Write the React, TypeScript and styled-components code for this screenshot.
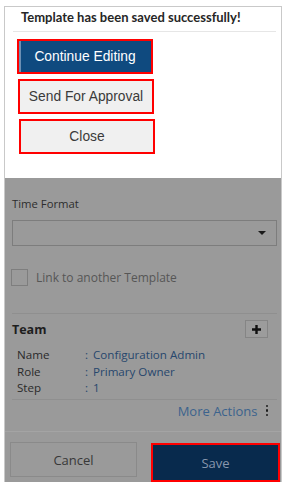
import React from "react";
import styled, { createGlobalStyle } from "styled-components";

const Global = createGlobalStyle`
  html, body { margin: 0; padding: 0; background: #ffffff; }
  body { font-family: "Open Sans", "Noto Sans", sans-serif; }
  * { box-sizing: border-box; }
`;

const Frame = styled.div`
  margin: 6px 0 0 4px;
  width: 278px;
  height: 476px;
  border: 1px solid #c9c9c9;
  border-bottom: none;
  display: flex;
  flex-direction: column;
  overflow: visible;
`;

const Dialog = styled.div`
  background: #ffffff;
  height: 171px;
  display: flex;
  flex-direction: column;
`;

const DialogTitle = styled.div`
  font-family: "Lato", "Open Sans", sans-serif;
  font-weight: 700;
  font-size: 13px;
  color: #262626;
  height: 25px;
  line-height: 21px;
  border-bottom: 1px solid #e6e6e6;
  margin: 0 5px 0 8px;
  padding-left: 8px;
`;

const ButtonStack = styled.div`
  display: flex;
  flex-direction: column;
  gap: 5px;
  padding-top: 7px;
  padding-left: 12px;
`;

const DialogButton = styled.button<{ $primary?: boolean; $shift?: number }>`
  width: 136px;
  height: 35px;
  margin-left: ${(p) => p.$shift ?? 0}px;
  border: 2px solid #ff0000;
  background: ${(p) => (p.$primary ? "#0f4a7f" : "#f0f0f0")};
  box-shadow: ${(p) => (p.$primary ? "inset 2px 0 0 #6d8fb3" : "none")};
  color: ${(p) => (p.$primary ? "#ffffff" : "#3a3a3a")};
  font-family: "Liberation Sans", Arial, sans-serif;
  font-size: 13.8px;
  padding: 0;
  cursor: pointer;
`;

const Dimmed = styled.div`
  flex: 1;
  background: #9a9a9a;
  display: flex;
  flex-direction: column;
`;

const Form = styled.div`
  padding: 18px 4px 0 7px;
  display: flex;
  flex-direction: column;
`;

const FieldLabel = styled.div`
  font-size: 11.3px;
  line-height: 15px;
  color: #2d2d2d;
  margin-bottom: 9px;
`;

const Select = styled.div`
  height: 26px;
  border: 1px solid #7d7d7d;
  display: flex;
  align-items: center;
  justify-content: flex-end;
  padding-right: 10px;
`;

const Caret = styled.div`
  width: 0;
  height: 0;
  border-left: 4px solid transparent;
  border-right: 4px solid transparent;
  border-top: 4px solid #1a1a1a;
`;

const CheckRow = styled.label`
  display: flex;
  align-items: center;
  gap: 8px;
  margin: 23px 0 0 -1px;
  font-size: 12px;
  color: #565656;
`;

const Box = styled.span`
  width: 17px;
  height: 17px;
  border: 1px solid #7e7e7e;
  display: inline-block;
`;

const Divider = styled.div<{ $top: number }>`
  height: 1px;
  background: #8f8f8f;
  margin-top: ${(p) => p.$top}px;
`;

const SectionHead = styled.div`
  display: flex;
  align-items: center;
  justify-content: space-between;
  margin-top: 6px;
  padding-right: 9px;
`;

const SectionTitle = styled.div`
  font-weight: 700;
  font-size: 12.5px;
  color: #1e1e1e;
`;

const AddButton = styled.button`
  width: 23px;
  height: 18px;
  border: 1px solid #858585;
  background: #9c9c9c;
  padding: 0;
  display: flex;
  align-items: center;
  justify-content: center;
`;

const Details = styled.div`
  display: grid;
  grid-template-columns: 68px 8px 1fr;
  padding-left: 5px;
  margin-top: 9px;
  font-size: 11.6px;
  line-height: 16.5px;
  color: #2a2a2a;
`;

const Value = styled.span`
  color: #27476d;
`;

const Colon = styled.span`
  color: #27476d;
`;

const MoreRow = styled.div`
  display: flex;
  justify-content: flex-end;
  align-items: center;
  gap: 8px;
  padding-right: 9px;
  margin-top: 1px;
  font-size: 13px;
  color: #3c638d;
  height: 20px;
`;

const Kebab = styled.span`
  display: flex;
  flex-direction: column;
  gap: 2px;
  span {
    width: 2.5px;
    height: 2.5px;
    background: #1c1c1c;
    border-radius: 50%;
  }
`;

const Footer = styled.div`
  margin-top: auto;
  border-top: 1px solid #a4a4a4;
  display: grid;
  grid-template-columns: 127px 129px;
  column-gap: 14px;
  padding: 10px 0 0 5px;
  height: 51px;
  align-items: start;
`;

const FooterButton = styled.button<{ $save?: boolean }>`
  height: ${(p) => (p.$save ? "39px" : "35px")};
  margin-top: ${(p) => (p.$save ? "1px" : "0")};
  border: ${(p) => (p.$save ? "2px solid #ff0000" : "1px solid #8a8a8a")};
  background: ${(p) => (p.$save ? "#082a4d" : "#9a9a9a")};
  color: ${(p) => (p.$save ? "#8797ad" : "#383838")};
  font-family: "Open Sans", sans-serif;
  font-size: 13px;
  padding: 0;
`;

export default function App() {
  return (
    <>
      <Global />
      <Frame>
        <Dialog>
          <DialogTitle>Template has been saved successfully!</DialogTitle>
          <ButtonStack>
            <DialogButton $primary>Continue Editing</DialogButton>
            <DialogButton $shift={1}>Send For Approval</DialogButton>
            <DialogButton $shift={2}>Close</DialogButton>
          </ButtonStack>
        </Dialog>
        <Dimmed>
          <Form>
            <FieldLabel>Time Format</FieldLabel>
            <Select>
              <Caret />
            </Select>
            <CheckRow>
              <Box />
              Link to another Template
            </CheckRow>
            <Divider $top={27} />
            <SectionHead>
              <SectionTitle>Team</SectionTitle>
              <AddButton>
                <svg width="11" height="11" viewBox="0 0 11 11">
                  <path d="M5.5 1v9M1 5.5h9" stroke="#111" strokeWidth="2.4" />
                </svg>
              </AddButton>
            </SectionHead>
            <Details>
              <span>Name</span>
              <Colon>:</Colon>
              <Value>Configuration Admin</Value>
              <span>Role</span>
              <Colon>:</Colon>
              <Value>Primary Owner</Value>
              <span>Step</span>
              <Colon>:</Colon>
              <Value>1</Value>
            </Details>
            <Divider $top={2} />
            <MoreRow>
              More Actions
              <Kebab>
                <span />
                <span />
                <span />
              </Kebab>
            </MoreRow>
          </Form>
          <Footer>
            <FooterButton>Cancel</FooterButton>
            <FooterButton $save>Save</FooterButton>
          </Footer>
        </Dimmed>
      </Frame>
    </>
  );
}
